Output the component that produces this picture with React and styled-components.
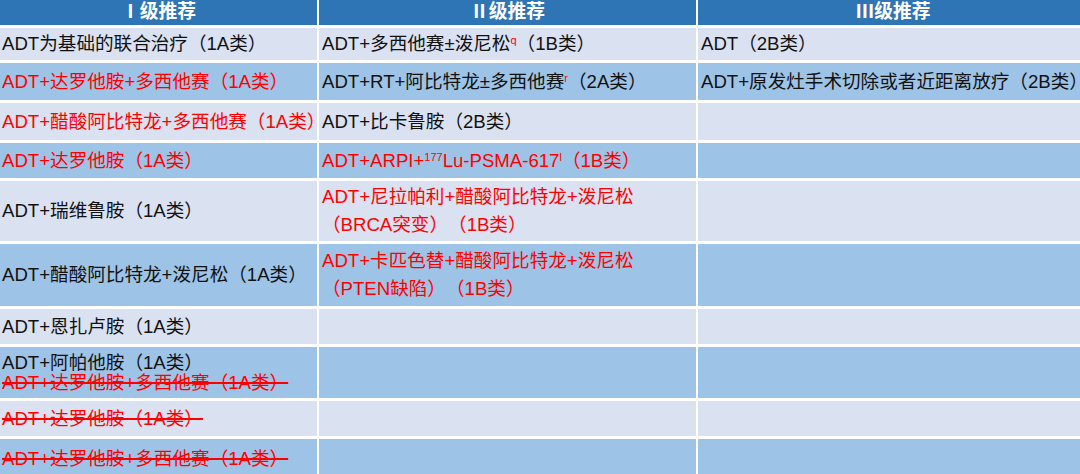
import React from "react";
import styled, { createGlobalStyle } from "styled-components";

const Global = createGlobalStyle`
  html, body { margin: 0; padding: 0; background: #ffffff; }
  body {
    font-family: "Liberation Sans", "Noto Sans CJK SC", sans-serif;
    text-spacing-trim: space-all;
  }
`;

const Table = styled.div`
  display: grid;
  width: 1080px;
  height: 474px;
  overflow: hidden;
  grid-template-columns: 317px 377px 1fr;
  grid-template-rows: 25px 32px 37px 37px 35px 60px 62px 35px 51px 35px 40px;
  column-gap: 2px;
  row-gap: 3px;
  background: #ffffff;
`;

const HeaderCell = styled.div`
  background: #2e75b6;
  color: #ffffff;
  font-weight: bold;
  font-size: 18.8px;
  line-height: 22px;
  display: flex;
  align-items: center;
  justify-content: center;
  padding-bottom: 2px;
  box-sizing: border-box;
  white-space: nowrap;
`;

const Cell = styled.div`
  background: ${(p) => (p.$dark ? "#9dc3e6" : "#dae1f1")};
  display: flex;
  flex-direction: column;
  justify-content: center;
  padding-left: ${(p) => (p.$first ? "2px" : "3px")};
  font-size: 18.6px;
  line-height: ${(p) => p.$lh || 22}px;
  white-space: nowrap;
  overflow: visible;
  box-sizing: border-box;
`;

const Line = styled.div`
  color: ${(p) => (p.$red ? "#ff0000" : "#111111")};
  text-decoration: ${(p) => (p.$strike ? "line-through" : "none")};
  text-decoration-color: #ff0000;
  text-decoration-thickness: 2px;
`;

const Sup = styled.sup`
  font-size: 11px;
  line-height: 0;
  vertical-align: ${(p) => p.$shift || 6}px;
  color: ${(p) => (p.$red ? "#ff0000" : "inherit")};
`;

const rows = [
  {
    c1: [{ t: "ADT为基础的联合治疗（1A类）" }],
    c2: [{ t: <>ADT+多西他赛±泼尼松<Sup $red>q</Sup>（1B类）</> }],
    c3: [{ t: "ADT（2B类）" }],
  },
  {
    c1: [{ t: "ADT+达罗他胺+多西他赛（1A类）", red: true }],
    c2: [{ t: <>ADT+RT+阿比特龙±多西他赛<Sup $red>r</Sup>（2A类）</> }],
    c3: [{ t: "ADT+原发灶手术切除或者近距离放疗（2B类）" }],
  },
  {
    c1: [{ t: "ADT+醋酸阿比特龙+多西他赛（1A类）", red: true }],
    c2: [{ t: "ADT+比卡鲁胺（2B类）" }],
    c3: [],
  },
  {
    c1: [{ t: "ADT+达罗他胺（1A类）", red: true }],
    c2: [{ t: <>ADT+ARPI+<Sup>177</Sup>Lu-PSMA-617<Sup>l</Sup>（1B类）</>, red: true }],
    c3: [],
  },
  {
    c1: [{ t: "ADT+瑞维鲁胺（1A类）" }],
    c2: [
      { t: "ADT+尼拉帕利+醋酸阿比特龙+泼尼松", red: true },
      { t: "（BRCA突变）（1B类）", red: true },
    ],
    lh2: 28,
    c3: [],
  },
  {
    c1: [{ t: "ADT+醋酸阿比特龙+泼尼松（1A类）" }],
    c2: [
      { t: "ADT+卡匹色替+醋酸阿比特龙+泼尼松", red: true },
      { t: "（PTEN缺陷）（1B类）", red: true },
    ],
    lh2: 28,
    c3: [],
  },
  {
    c1: [{ t: "ADT+恩扎卢胺（1A类）" }],
    c2: [],
    c3: [],
  },
  {
    c1: [
      { t: "ADT+阿帕他胺（1A类）" },
      { t: "ADT+达罗他胺+多西他赛（1A类）", red: true, strike: true },
    ],
    lh1: 20,
    c2: [],
    c3: [],
  },
  {
    c1: [{ t: "ADT+达罗他胺（1A类）", red: true, strike: true }],
    c2: [],
    c3: [],
  },
  {
    c1: [{ t: "ADT+达罗他胺+多西他赛（1A类）", red: true, strike: true }],
    c2: [],
    c3: [],
  },
];

const Lines = ({ items }) =>
  items.map((l, i) => (
    <Line key={i} $red={l.red} $strike={l.strike}>
      {l.t}
    </Line>
  ));

export default function App() {
  return (
    <>
      <Global />
      <Table>
        <HeaderCell>Ⅰ级推荐</HeaderCell>
        <HeaderCell>Ⅱ级推荐</HeaderCell>
        <HeaderCell>Ⅲ级推荐</HeaderCell>
        {rows.map((r, i) => (
          <React.Fragment key={i}>
            <Cell $dark={i % 2 === 1} $first $lh={r.lh1}>
              <Lines items={r.c1} />
            </Cell>
            <Cell $dark={i % 2 === 1} $lh={r.lh2}>
              <Lines items={r.c2} />
            </Cell>
            <Cell $dark={i % 2 === 1}>
              <Lines items={r.c3} />
            </Cell>
          </React.Fragment>
        ))}
      </Table>
    </>
  );
}
